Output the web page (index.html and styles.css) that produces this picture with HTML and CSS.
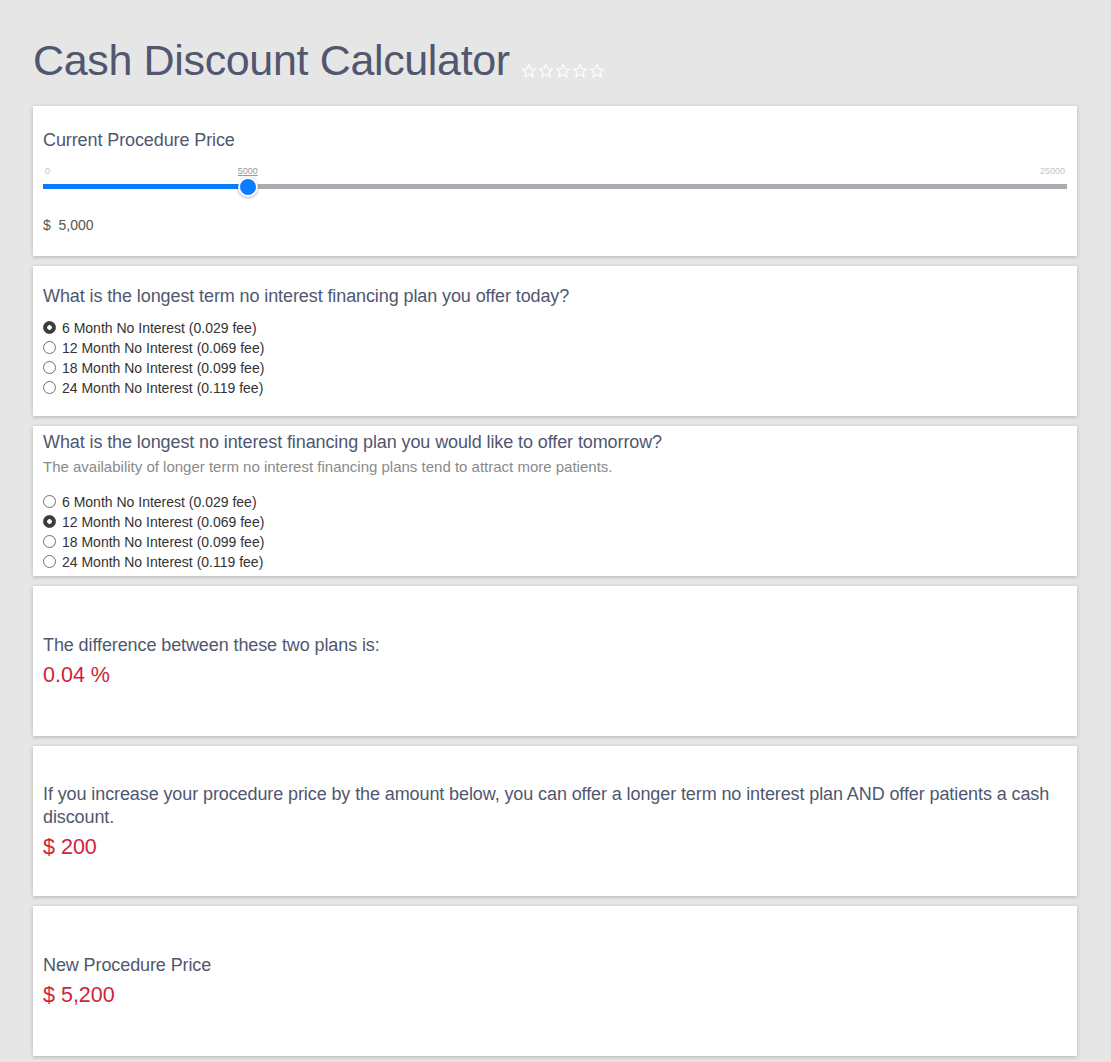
FILE: index.html
```html
<!DOCTYPE html>
<html lang="en">
<head>
	<meta charset="UTF-8">
	<title>Cash Discount Calculator</title>
	<link rel="stylesheet" href="styles.css">
</head>
<body>

	<h1 class="page-title">Cash Discount Calculator
		<span class="stars">
			<svg viewBox="0 0 16 16"><path d="M8 1.5l1.9 4.3 4.6.4-3.5 3 1.1 4.6L8 11.4l-4.1 2.4 1.1-4.6-3.5-3 4.6-.4z"/></svg>
			<svg viewBox="0 0 16 16"><path d="M8 1.5l1.9 4.3 4.6.4-3.5 3 1.1 4.6L8 11.4l-4.1 2.4 1.1-4.6-3.5-3 4.6-.4z"/></svg>
			<svg viewBox="0 0 16 16"><path d="M8 1.5l1.9 4.3 4.6.4-3.5 3 1.1 4.6L8 11.4l-4.1 2.4 1.1-4.6-3.5-3 4.6-.4z"/></svg>
			<svg viewBox="0 0 16 16"><path d="M8 1.5l1.9 4.3 4.6.4-3.5 3 1.1 4.6L8 11.4l-4.1 2.4 1.1-4.6-3.5-3 4.6-.4z"/></svg>
			<svg viewBox="0 0 16 16"><path d="M8 1.5l1.9 4.3 4.6.4-3.5 3 1.1 4.6L8 11.4l-4.1 2.4 1.1-4.6-3.5-3 4.6-.4z"/></svg>
		</span>
	</h1>

	<!-- price slider -->
	<div class="card">
		<div class="card-title">Current Procedure Price</div>
		<div class="slider">
			<div class="slider-labels">
				<span>0</span>
				<span class="slider-value" style="left: 20%">5000</span>
				<span>25000</span>
			</div>
			<div class="slider-track">
				<div class="slider-fill" style="width: 20%"></div>
				<div class="slider-thumb" style="left: 20%"></div>
			</div>
		</div>
		<div class="price">$&nbsp; 5,000</div>
	</div>

	<!-- today -->
	<div class="card">
		<div class="card-title">What is the longest term no interest financing plan you offer today?</div>
		<div class="options">
			<label><input type="radio" name="today" checked> 6 Month No Interest (0.029 fee)</label>
			<label><input type="radio" name="today"> 12 Month No Interest (0.069 fee)</label>
			<label><input type="radio" name="today"> 18 Month No Interest (0.099 fee)</label>
			<label><input type="radio" name="today"> 24 Month No Interest (0.119 fee)</label>
		</div>
	</div>

	<!-- tomorrow -->
	<div class="card">
		<div class="card-title">What is the longest no interest financing plan you would like to offer tomorrow?</div>
		<div class="card-note">The availability of longer term no interest financing plans tend to attract more patients.</div>
		<div class="options">
			<label><input type="radio" name="tomorrow"> 6 Month No Interest (0.029 fee)</label>
			<label><input type="radio" name="tomorrow" checked> 12 Month No Interest (0.069 fee)</label>
			<label><input type="radio" name="tomorrow"> 18 Month No Interest (0.099 fee)</label>
			<label><input type="radio" name="tomorrow"> 24 Month No Interest (0.119 fee)</label>
		</div>
	</div>

	<div class="card">
		<div class="card-title">The difference between these two plans is:</div>
		<div class="result">0.04 %</div>
	</div>

	<div class="card">
		<div class="card-title">If you increase your procedure price by the amount below, you can offer a longer term no interest plan AND offer patients a cash discount.</div>
		<div class="result">$ 200</div>
	</div>

	<div class="card">
		<div class="card-title">New Procedure Price</div>
		<div class="result">$ 5,200</div>
	</div>

</body>
</html>
```

FILE: styles.css
```css
body {
    margin: 0px;
    padding: 0px 34px 10px 33px;
    background: #e6e6e6;
    font-family: "Liberation Sans", Arial, sans-serif;
    color: #50576f;
}

.page-title {
    margin: 0px;
    padding: 34px 0px 20px 0px;
    font-size: 43px;
    font-weight: normal;
    line-height: 52px;
    color: #50576f;
    letter-spacing: -0.35px;
}

.stars {
    display: inline-flex;
    gap: 1px;
    vertical-align: -4px;
    margin-left: 0px;
}

.stars svg {
    width: 16px;
    height: 16px;
    fill: none;
    stroke: #ffffff;
    stroke-width: 1.1;
}

.card {
    height: 150px;
    box-sizing: border-box;
    margin-bottom: 10px;
    padding: 0px 10px;
    background: #ffffff;
    box-shadow: 0px 1px 4px rgba(0, 0, 0, .22);
    display: flex;
    flex-direction: column;
    justify-content: center;
}

.card-title {
    font-size: 18px;
    line-height: 23px;
    letter-spacing: -0.1px;
}

.card-note {
    margin-top: 4px;
    font-size: 15px;
    line-height: 18px;
    color: #8a8a8a;
}

/* slider */
.slider {
    margin-top: 13px;
}

.slider-labels {
    position: relative;
    display: flex;
    justify-content: space-between;
    padding: 0px 2px;
    font-size: 9px;
    line-height: 12px;
    color: #c4c4c4;
}

.slider-labels .slider-value {
    position: absolute;
    transform: translateX(-50%);
    color: #9a9a9a;
    text-decoration: underline;
}

.slider-track {
    position: relative;
    margin-top: 7px;
    height: 5px;
    background: #a9acb0;
}

.slider-fill {
    height: 100%;
    background: #0a7cff;
}

.slider-thumb {
    position: absolute;
    top: 50%;
    width: 16px;
    height: 16px;
    border: 2px solid #ffffff;
    border-radius: 50%;
    background: #0a7cff;
    box-shadow: 0px 1px 3px rgba(0, 0, 0, .3);
    transform: translate(-50%, -50%);
}

.price {
    margin-top: 28px;
    font-size: 14px;
    color: #555555;
}

/* radios */
.options {
    margin-top: 10px;
}

.card-note + .options {
    margin-top: 16px;
}

.options label {
    display: flex;
    align-items: center;
    height: 20px;
    font-size: 14px;
    color: #333333;
}

.options input {
    appearance: none;
    -webkit-appearance: none;
    width: 13px;
    height: 13px;
    margin: 0px 6px 0px 0px;
    border: 1px solid #6f6f6f;
    border-radius: 50%;
    background: #ffffff;
    box-sizing: border-box;
}

.options input:checked {
    border-color: #3d3d3d;
    background: radial-gradient(circle, #ffffff 0px, #ffffff 2px, #3d3d3d 2.6px);
}

/* results */
.result {
    margin-top: 5px;
    font-size: 21.5px;
    line-height: 26px;
    color: #d0233a;
}
```
